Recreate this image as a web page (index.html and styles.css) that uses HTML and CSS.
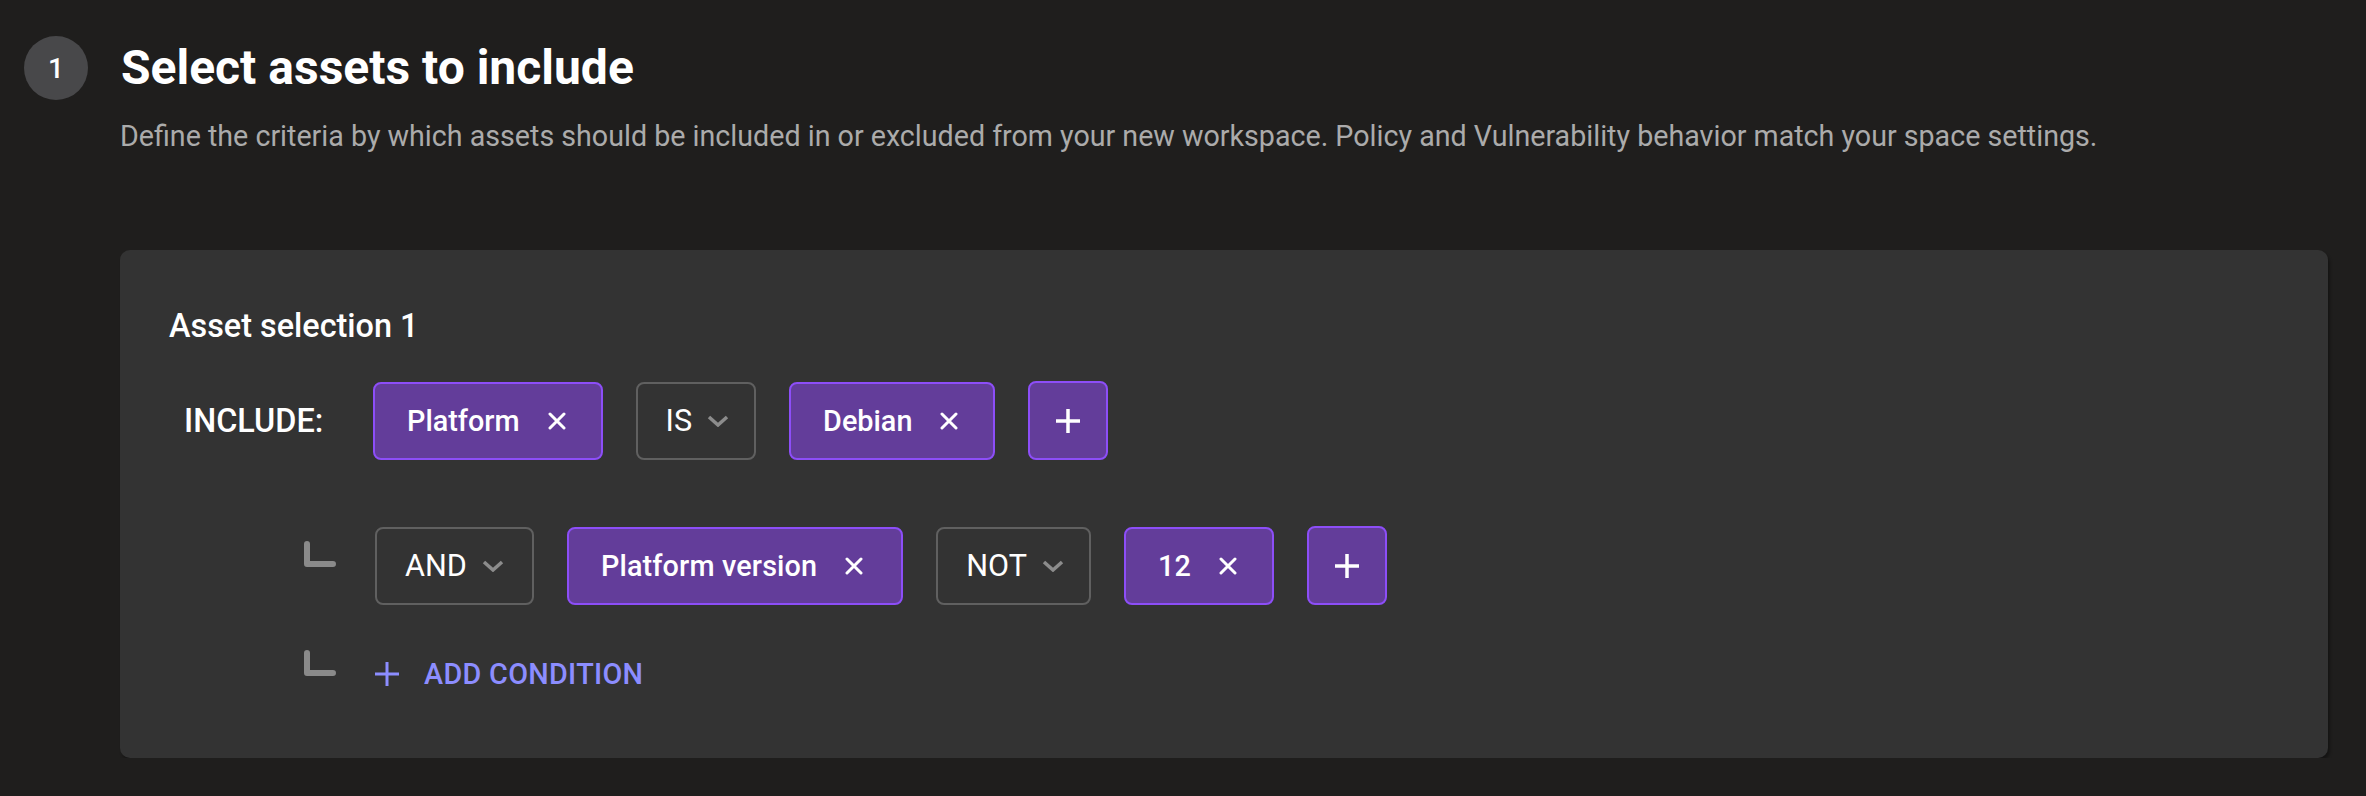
FILE: index.html
```html
<!DOCTYPE html>
<html lang="en">
<head>
    <meta charset="UTF-8">
    <title>Select assets</title>
    <link rel="stylesheet" href="styles.css">
</head>
<body>

<div class="step">
    <div class="step-badge">1</div>
    <h1 class="step-title">Select assets to include</h1>

    <div class="step-body">
        <p class="step-desc">Define the criteria by which assets should be included in or excluded from your new workspace. Policy and Vulnerability behavior match your space settings.</p>

        <div class="selection-card">
            <h2 class="selection-title">Asset selection 1</h2>

            <div class="cond-grid">
                <!-- include row -->
                <span class="include-label">INCLUDE:</span>
                <div class="cond-row">
                    <span class="chip">Platform
                        <svg class="chip-x" viewBox="0 0 18 18"><path d="M2 2 L16 16 M16 2 L2 16"/></svg>
                    </span>
                    <span class="select">IS
                        <svg class="chevron" viewBox="0 0 22 12"><path d="M2 2 L11 10 L20 2"/></svg>
                    </span>
                    <span class="chip">Debian
                        <svg class="chip-x" viewBox="0 0 18 18"><path d="M2 2 L16 16 M16 2 L2 16"/></svg>
                    </span>
                    <button class="plus-btn">
                        <svg viewBox="0 0 24 24"><path d="M12 0 V24 M0 12 H24"/></svg>
                    </button>
                </div>

                <!-- and row -->
                <svg class="branch" viewBox="0 0 32 26"><path d="M3 3 V23 H29"/></svg>
                <div class="cond-row sub-row">
                    <span class="select select-wide">AND
                        <svg class="chevron" viewBox="0 0 22 12"><path d="M2 2 L11 10 L20 2"/></svg>
                    </span>
                    <span class="chip chip-wide">Platform version
                        <svg class="chip-x" viewBox="0 0 18 18"><path d="M2 2 L16 16 M16 2 L2 16"/></svg>
                    </span>
                    <span class="select">NOT
                        <svg class="chevron" viewBox="0 0 22 12"><path d="M2 2 L11 10 L20 2"/></svg>
                    </span>
                    <span class="chip">12
                        <svg class="chip-x" viewBox="0 0 18 18"><path d="M2 2 L16 16 M16 2 L2 16"/></svg>
                    </span>
                    <button class="plus-btn">
                        <svg viewBox="0 0 24 24"><path d="M12 0 V24 M0 12 H24"/></svg>
                    </button>
                </div>

                <!-- add condition -->
                <svg class="branch branch-last" viewBox="0 0 32 26"><path d="M3 3 V23 H29"/></svg>
                <div class="cond-row add-row">
                    <button class="add-condition">
                        <svg viewBox="0 0 24 24"><path d="M12 0 V24 M0 12 H24"/></svg>
                        ADD CONDITION
                    </button>
                </div>
            </div>
        </div>
    </div>
</div>

</body>
</html>
```

FILE: styles.css
```css
* {
    margin: 0;
    padding: 0;
    box-sizing: border-box;
}

body {
    font-family: 'Roboto', 'Liberation Sans', sans-serif;
    background-color: #1f1e1d;
    color: white;
}

.step {
    display: grid;
    grid-template-columns: 64px 1fr;
    column-gap: 33px;
    padding: 36px 38px 0 24px;
}

.step-badge {
    width: 64px;
    height: 64px;
    border-radius: 50%;
    background-color: #48484a;
    display: flex;
    align-items: center;
    justify-content: center;
    font-size: 28px;
    font-weight: 500;
}

.step-title {
    font-size: 48px;
    font-weight: 700;
    line-height: 64px;
}

.step-body {
    grid-column: 2;
    margin-left: -1px;
}

.step-desc {
    margin-top: 16px;
    font-size: 28.65px;
    line-height: 40px;
    color: #ababab;
}

.selection-card {
    margin-top: 94px;
    height: 508px;
    background-color: #333333;
    border-radius: 10px;
    box-shadow: 2px 3px 3px rgba(0, 0, 0, 0.35);
    padding: 57px 49px 0;
}

.selection-title {
    font-size: 32.4px;
    font-weight: 500;
    line-height: 38px;
}

.cond-grid {
    margin-top: 36px;
    display: grid;
    grid-template-columns: 204px auto;
    align-items: center;
}

.include-label {
    padding-left: 15px;
    font-size: 32.4px;
    font-weight: 500;
}

.branch {
    justify-self: end;
    align-self: start;
    margin-right: 37px;
    margin-top: 81px;
    width: 32px;
    height: 26px;
    fill: none;
    stroke: #8a8a8a;
    stroke-width: 6;
    stroke-linecap: round;
    stroke-linejoin: round;
}

.branch-last {
    margin-top: 45px;
}

.cond-row {
    display: flex;
    align-items: center;
    gap: 33px;
}

.sub-row {
    margin-top: 66px;
    padding-left: 2px;
}

.add-row {
    margin-top: 44px;
    padding-left: 2px;
}

.chip,
.select {
    height: 78px;
    display: flex;
    align-items: center;
    border-radius: 8px;
    border: 2px solid;
}

.chip {
    background-color: #633d9a;
    border-color: #8d4ef8;
    padding: 0 35px 0 32px;
    gap: 28px;
    font-size: 28.8px;
    font-weight: 500;
}

.chip-wide {
    padding-right: 38px;
    letter-spacing: 0.15px;
}

.chip-x {
    width: 18px;
    height: 18px;
    fill: none;
    stroke: white;
    stroke-width: 3;
    stroke-linecap: round;
}

.select {
    border-color: #606060;
    padding: 0 25px 0 28px;
    gap: 15px;
    font-size: 30.6px;
}

.select-wide {
    padding-right: 28px;
}

.chevron {
    width: 22px;
    height: 12px;
    fill: none;
    stroke: #8c8c8c;
    stroke-width: 3.5;
}

.plus-btn {
    width: 80px;
    height: 79px;
    border-radius: 8px;
    border: 2px solid #8d4ef8;
    background-color: #633d9a;
    display: flex;
    align-items: center;
    justify-content: center;
}

.plus-btn svg {
    width: 24px;
    height: 24px;
    stroke: white;
    stroke-width: 3.5;
}

.add-condition {
    display: flex;
    align-items: center;
    gap: 25px;
    height: 50px;
    background: none;
    border: none;
    font-family: inherit;
    font-size: 28.8px;
    font-weight: 500;
    letter-spacing: 0.3px;
    color: #8c8dff;
}

.add-condition svg {
    width: 24px;
    height: 24px;
    stroke: #8c8dff;
    stroke-width: 3;
}
```
